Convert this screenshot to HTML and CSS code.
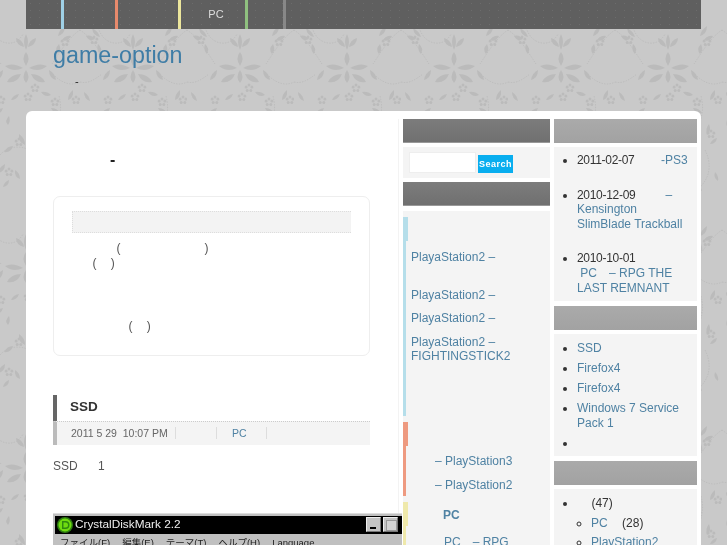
FILE: index.html
```html
<!DOCTYPE html>
<html lang="ja">

<head>
    <meta charset="UTF-8">
    <meta name="viewport" content="width=device-width, initial-scale=1.0">
    <title>game-option</title>
    <link rel="stylesheet" href="styles.css">
</head>

<body>
    <div class="page">
        <!-- menu -->
        <ul class="nav">
            <li class="nav-blue"><a href="#"></a></li>
            <li class="nav-red"><a href="#"></a></li>
            <li class="nav-yellow"><a href="#"></a></li>
            <li class="nav-green"><a href="#">PC</a></li>
            <li class="nav-gray"><a href="#"></a></li>
        </ul>

        <div class="head">
            <h1><a href="#">game-option</a></h1>
            <p class="tagline">-</p>
        </div>

        <div class="panel">
            <!-- main column -->
            <div class="main">
                <h2 class="page-title">-</h2>

                <div class="about">
                    <div class="about-bar"></div>
                    <p>&emsp;&emsp;&emsp;&ensp;&thinsp;(&emsp;&emsp;&emsp;&emsp;&emsp;&emsp;&emsp;)<br>&emsp;&ensp;&thinsp;(&emsp;&thinsp;)</p>
                    <p class="about-last">&emsp;&emsp;&emsp;&emsp;&ensp;&thinsp;(&emsp;&thinsp;)</p>
                </div>

                <div class="post">
                    <h3 class="post-title"><a href="#">SSD</a></h3>
                    <div class="post-meta">
                        <span class="meta-date">2011 5 29&nbsp; 10:07 PM</span>
                        <span class="meta-blank"></span>
                        <a class="meta-cat" href="#">PC</a>
                    </div>
                    <p class="post-text">SSD&emsp;&ensp;&thinsp;1</p>
                    <div class="shot">
                        <div class="shot-title">
                            <svg class="shot-icon" viewBox="0 0 16 16" width="16" height="16">
                                <circle cx="8" cy="8" r="8" fill="#2f7d12"></circle>
                                <circle cx="8" cy="8" r="6.500" fill="#6fdc10"></circle>
                                <path d="M5 4h3.500a4 4 0 0 1 0 8H5zM6.500 5.500v5h2a2.500 2.500 0 0 0 0-5z" fill="#2f8a0e"></path>
                            </svg>
                            <span class="shot-name">CrystalDiskMark 2.2</span>
                            <span class="shot-btn shot-min"></span>
                            <span class="shot-btn shot-max"></span>
                        </div>
                        <div class="shot-menu">
                            <span>ファイル(F)</span>
                            <span>編集(E)</span>
                            <span>テーマ(T)</span>
                            <span>ヘルプ(H)</span>
                            <span>Language</span>
                        </div>
                    </div>
                </div>
            </div>

            <!-- left sidebar -->
            <div class="side side-a">
                <div class="side-bar"></div>
                <form class="box search">
                    <input class="search-input" type="text">
                    <button class="search-btn" type="button">Search</button>
                </form>
                <div class="side-bar"></div>
                <div class="box cats">
                    <div class="cat cat-blue">
                        <ul>
                            <li><a href="#">PlayaStation2 –<br>&emsp;</a></li>
                            <li><a href="#">PlayaStation2 –</a></li>
                            <li><a href="#">PlayaStation2 –</a></li>
                            <li><a href="#">PlayaStation2 – FIGHTINGSTICK2</a></li>
                        </ul>
                    </div>
                    <div class="cat cat-red">
                        <ul>
                            <li><a href="#">&emsp;&emsp;– PlayStation3</a></li>
                            <li><a href="#">&emsp;&emsp;– PlayStation2</a></li>
                        </ul>
                    </div>
                    <div class="cat cat-yellow">
                        <ul>
                            <li class="cat-head"><a href="#">PC</a></li>
                            <li class="cat-sub"><a href="#">PC&emsp;– RPG</a></li>
                        </ul>
                    </div>
                </div>
            </div>

            <!-- right sidebar -->
            <div class="side side-b">
                <div class="side-bar"></div>
                <div class="box">
                    <ul class="list list-recent">
                        <li><span class="date">2011-02-07</span>&emsp;&emsp;&thinsp;<a class="nowrap" href="#">-PS3</a></li>
                        <li><span class="date">2010-12-09</span>&emsp;&emsp;&ensp;<a href="#">– Kensington SlimBlade Trackball</a></li>
                        <li><span class="date">2010-10-01</span><br><a href="#">&nbsp;PC&emsp;– RPG THE LAST REMNANT</a></li>
                    </ul>
                </div>
                <div class="side-bar"></div>
                <div class="box">
                    <ul class="list">
                        <li><a href="#">SSD</a></li>
                        <li><a href="#">Firefox4</a></li>
                        <li><a href="#">Firefox4</a></li>
                        <li><a href="#">Windows 7 Service Pack 1</a></li>
                        <li>&emsp;</li>
                    </ul>
                </div>
                <div class="side-bar"></div>
                <div class="box">
                    <ul class="list">
                        <li>&emsp;&thinsp;(47)
                            <ul class="sublist">
                                <li><a href="#">PC</a>&emsp;&thinsp;(28)</li>
                                <li><a href="#">PlayStation2</a></li>
                            </ul>
                        </li>
                    </ul>
                </div>
            </div>
        </div>
    </div>
</body>

</html>
```

FILE: styles.css
```css
* {
    box-sizing: border-box;
}

html,
body {
    height: 545px;
    overflow: hidden;
}

body {
    margin: 0;
    font-family: "Liberation Sans", Arial, sans-serif;
    font-size: 12px;
    line-height: 14.6px;
    color: #333;
    background-color: #c9c9c9;
}

/* damask wallpaper behind everything */
body::before {
    content: "";
    position: fixed;
    top: 0;
    right: 0;
    bottom: 0;
    left: 0;
    z-index: -1;
    filter: blur(0.5px);
    background-position: -27px 0;
    background-image: url("data:image/svg+xml,%3Csvg xmlns='http://www.w3.org/2000/svg' xmlns:xlink='http://www.w3.org/1999/xlink' width='107' height='200' fill='%23bbb'%3E%3Cdefs%3E%3Cg id='f'%3E%3Ccircle cy='-3' r='1.500'/%3E%3Ccircle cx='2.900' cy='-.9' r='1.500'/%3E%3Ccircle cx='1.800' cy='2.400' r='1.500'/%3E%3Ccircle cx='-1.800' cy='2.400' r='1.500'/%3E%3Ccircle cx='-2.900' cy='-.9' r='1.500'/%3E%3C/g%3E%3C/defs%3E%3Cg fill='none' stroke='%23bdbdbd' stroke-dasharray='1.500 1.200'%3E%3Cpath d='M0 30c12 8 20 22 28 34M107 30c-12 8-20 22-28 34M82 76c8 8 18 10 25 6M0 82c8 2 14-2 22-8M24 8c-10 8-8 28 6 34 8 3 16 0 20-8M86 96c4 14 0 30-10 38M60 152c-12-8-26-6-34 4M90 150c8 16 4 30-8 40M18 128c-4 12-2 26 6 36'/%3E%3C/g%3E%3Cpath d='M53 34q4 8 0 16q-4-8 0-16zM51 47q-8-2-8-9q7 2 8 9zM55 47q8-2 8-9q-7 2-8 9zM53 52q5 6 0 14q-5-8 0-14zM50 68q-10-6-18-2q8 7 18 2zM56 68q10-6 18-2q-8 7-18 2zM48 74q-10 0-14 8q10 2 14-8zM58 74q10 0 14 8q-10 2-14-8zM53 70q5 7 0 13q-5-6 0-13zM30 70q-6 3-7 10q7-2 7-10zM76 70q6 3 7 10q-7-2-7-10zM12 28q6 3 8 9q-7-1-8-9zM6 36q5-2 9 3q-6 3-9-3zM18 44q-2 6 2 10q3-6-2-10zM92 26q-6 4-7 10q7-2 7-10zM98 36q-5-1-9 4q6 2 9-4zM86 44q3 6-1 10q-4-5 1-10zM68 92q6-1 10 3q-6 3-10-3zM46 94q-6 1-8 6q6 0 8-6zM100 90q-5 4-5 10q6-2 5-10zM4 92q5 3 6 9q-6-2-6-9zM78 108q6 0 9 5q-6 2-9-5zM76 118q-2 5 1 9q3-5-1-9zM30 108q-6 1-9 6q7 1 9-6zM36 116q2 5-1 9q-4-4 1-9zM46 134q6 4 6 11q-7-3-6-11zM40 146q-6 0-9 6q7 1 9-6zM56 150q5 3 6 9q-6-2-6-9zM94 124q-4 5-2 11q5-4 2-11zM102 138q-5 1-7 6q6 0 7-6zM6 118q3 5 1 11q-5-4-1-11zM32 164q-6 3-7 9q7-1 7-9zM42 170q5 3 5 9q-6-2-5-9zM36 180q-5 2-6 7q6-1 6-7zM72 166q5 4 5 10q-6-3-5-10zM64 178q-5 1-7 6q6 0 7-6zM82 184q4 2 5 7q-5-1-5-7zM10 180q-3 5-1 10q4-4 1-10zM100 172q4 4 3 9q-5-3-3-9zM68 2q5 3 5 9q-6-2-5-9zM60 14q-4 3-4 8q5-2 4-8zM76 16q4 3 4 8q-5-2-4-8z'/%3E%3Cuse xlink:href='%23f' x='62' y='88'/%3E%3Cuse xlink:href='%23f' x='55' y='97'/%3E%3Cuse xlink:href='%23f' x='14' y='40'/%3E%3Cuse xlink:href='%23f' x='92' y='42'/%3E%3Cuse xlink:href='%23f' x='103' y='100'/%3E%3Cuse xlink:href='%23f' x='82' y='102'/%3E%3Cuse xlink:href='%23f' x='28' y='100'/%3E%3Cuse xlink:href='%23f' x='46' y='142'/%3E%3Cuse xlink:href='%23f' x='96' y='134'/%3E%3Cuse xlink:href='%23f' x='36' y='172'/%3E%3Cuse xlink:href='%23f' x='70' y='176'/%3E%3Cuse xlink:href='%23f' x='14' y='190'/%3E%3Cuse xlink:href='%23f' x='70' y='12'/%3E%3C/svg%3E");
}

a {
    color: #4f82a3;
    text-decoration: none;
}

ul {
    margin: 0;
    padding: 0;
}

.nowrap {
    white-space: nowrap;
}

.date {
    letter-spacing: -0.3px;
}

/* the reference is a soft, resized capture */
.page {
    width: 675px;
    margin-left: 26px;
    filter: blur(0.35px);
}

/* menu */
.nav {
    display: flex;
    height: 29px;
    list-style: none;
    background-color: #5f5f5f;
    background-image: radial-gradient(#6c6c6c 0.5px, transparent 1px);
    background-size: 9px 7px;
}

.nav li {
    border-right: 3px solid #888;
    text-align: center;
    line-height: 29px;
}

.nav a {
    color: #ddd;
    font-size: 11px;
}

.nav-blue {
    width: 38px;
    border-right-color: #9fd0e6 !important;
}

.nav-red {
    width: 54px;
    border-right-color: #e88a6c !important;
}

.nav-yellow {
    width: 63px;
    border-right-color: #ece69c !important;
}

.nav-green {
    width: 67px;
    padding-left: 6px;
    border-right-color: #8fc07f !important;
}

.nav-gray {
    width: 38px;
    border-right-color: #888 !important;
}

/* site title */
.head {
    height: 82px;
    padding: 11px 0 0 27px;
}

.head h1 {
    margin: 0;
    font-size: 23.300px;
    font-weight: normal;
    line-height: 30px;
}

.head h1 a {
    color: #3f7da6;
}

.tagline {
    margin: 4px 0 0 22px;
    font-size: 11px;
    line-height: 14px;
    color: #222;
}

/* white panel */
.panel {
    display: flex;
    align-items: flex-start;
    height: 434px;
    padding: 8px 4px 0 27px;
    background: #fff;
    border-radius: 6px 6px 0 0;
}

.main {
    flex: none;
    width: 346px;
    height: 426px;
    margin-right: 4px;
    border-right: 1px solid #f3f3f3;
}

.page-title {
    margin: 0;
    padding: 32px 0 0 57px;
    height: 77px;
    font-size: 16px;
    line-height: 18px;
    color: #222;
}

.about {
    width: 317px;
    height: 160px;
    padding: 14px 18px 0;
    border: 1px solid #eee;
    border-radius: 7px;
}

.about-bar {
    height: 22px;
    margin-bottom: 8px;
    background: #f3f3f3;
    border: 1px dotted #ddd;
    border-right: 0;
}

.about p {
    margin: 0;
    color: #555;
}

.about .about-last {
    margin-top: 49px;
}

/* post */
.post {
    margin-top: 39px;
}

.post-title {
    height: 26px;
    margin: 0;
    padding-left: 13px;
    border-left: 4px solid #666;
    font-size: 13.500px;
    line-height: 23px;
}

.post-title a {
    color: #333;
}

.post-meta {
    display: flex;
    align-items: center;
    width: 317px;
    height: 24px;
    padding: 0 0 2px 14px;
    border-left: 4px solid #bbb;
    border-top: 1px dotted #ccc;
    background: #f4f4f4;
    font-size: 10.500px;
    color: #666;
}

.meta-date,
.meta-blank {
    height: 12px;
    line-height: 12px;
    border-right: 1px solid #ddd;
}

.meta-date {
    width: 105px;
}

.meta-blank {
    width: 41px;
}

.meta-cat {
    width: 50px;
    height: 12px;
    line-height: 12px;
    padding-left: 15px;
    border-right: 1px solid #ddd;
}

.post-text {
    margin: 14px 0 0;
    color: #555;
}

/* picture of the CrystalDiskMark window */
.shot {
    width: 349px;
    height: 32px;
    margin-top: 39px;
    padding: 2px 0 0 2px;
    background: #c0c0c0;
    border-top: 1px solid #ddd;
    overflow: hidden;
}

.shot-title {
    display: flex;
    align-items: center;
    height: 18px;
    padding: 0 4px 0 2px;
    background: #000;
    color: #eee;
}

.shot-icon {
    flex: none;
}

.shot-name {
    flex: 1;
    margin-left: 2px;
    font-size: 11.800px;
}

.shot-btn {
    position: relative;
    width: 15px;
    height: 15px;
    margin-left: 2px;
    background: #c4c4c4;
    border: 1px solid #eee;
    border-right-color: #777;
    border-bottom-color: #777;
}

.shot-min::after {
    content: "";
    position: absolute;
    left: 3px;
    bottom: 2px;
    width: 6px;
    height: 2px;
    background: #000;
}

.shot-max::after {
    content: "";
    position: absolute;
    left: 2px;
    top: 2px;
    width: 9px;
    height: 9px;
    border: 1px solid #999;
    background: #d4d4d4;
}

.shot-menu {
    display: flex;
    gap: 12px;
    padding: 2px 0 0 5px;
    font-family: "Liberation Sans", "Noto Sans CJK JP", sans-serif;
    font-size: 9.500px;
    line-height: 13px;
    color: #222;
}

/* sidebars */
.side {
    flex: none;
}

.side-a {
    width: 147px;
    margin-right: 4px;
}

.side-b {
    width: 143px;
}

.side-bar {
    height: 24px;
    margin-bottom: 4px;
    background: linear-gradient(#7c7c7c, #707070);
    border-bottom: 1px solid #999;
}

.side-b .side-bar {
    background: linear-gradient(#aaa, #a2a2a2);
    border-bottom: 0;
}

.box {
    margin-bottom: 5px;
    background: #f4f4f4;
}

.search {
    display: flex;
    align-items: flex-start;
    height: 31px;
    margin-bottom: 4px;
    padding: 5px 0 0 6px;
}

.search-input {
    width: 67px;
    height: 21px;
    margin: 0;
    padding: 0;
    background: #fff;
    border: 1px solid #eee;
}

.search-btn {
    width: 35px;
    height: 18px;
    margin: 3px 0 0 2px;
    padding: 0;
    border: 0;
    background: #09aeef;
    color: #fff;
    font-family: "Liberation Sans", Arial, sans-serif;
    font-size: 9px;
    font-weight: bold;
    letter-spacing: 0.5px;
}

.cats {
    height: 334px;
    margin-top: 5px;
    padding-top: 6px;
    overflow: hidden;
}

.cat {
    position: relative;
    margin-bottom: 6px;
    padding: 32px 0 0 5px;
    border-left: 3px solid;
    list-style: none;
}

.cat::before {
    content: "";
    position: absolute;
    left: -3px;
    top: 0;
    width: 5px;
    height: 24px;
}

.cat ul {
    list-style: none;
}

.cat li {
    margin-bottom: 8.800px;
}

.cat-blue {
    height: 199px;
    padding-top: 33px;
    border-color: #b5deea;
}

.cat-blue::before {
    background: #b5deea;
}

.cat-red {
    height: 74px;
    border-color: #ee9a80;
}

.cat-red li {
    margin-bottom: 9.400px;
}

.cat-red::before {
    background: #ee9a80;
}

.cat-yellow {
    padding-top: 6px;
    border-color: #efe9ab;
}

.cat-yellow::before {
    background: #efe9ab;
}

.cat-head {
    padding-left: 32px;
    font-weight: bold;
    margin-bottom: 12px !important;
}

.cat-sub {
    padding-left: 33px;
}

.list {
    padding: 7px 6px 6px 23px;
}

.list-recent {
    padding-top: 6px;
}

.list li {
    margin-bottom: 5.400px;
}

.list-recent li {
    margin-bottom: 20px;
}

.list > li:last-child {
    margin-bottom: 0;
}

.sublist {
    margin-top: 5px;
    padding-left: 14px;
}

.sublist li {
    margin-bottom: 4.400px;
}
```
